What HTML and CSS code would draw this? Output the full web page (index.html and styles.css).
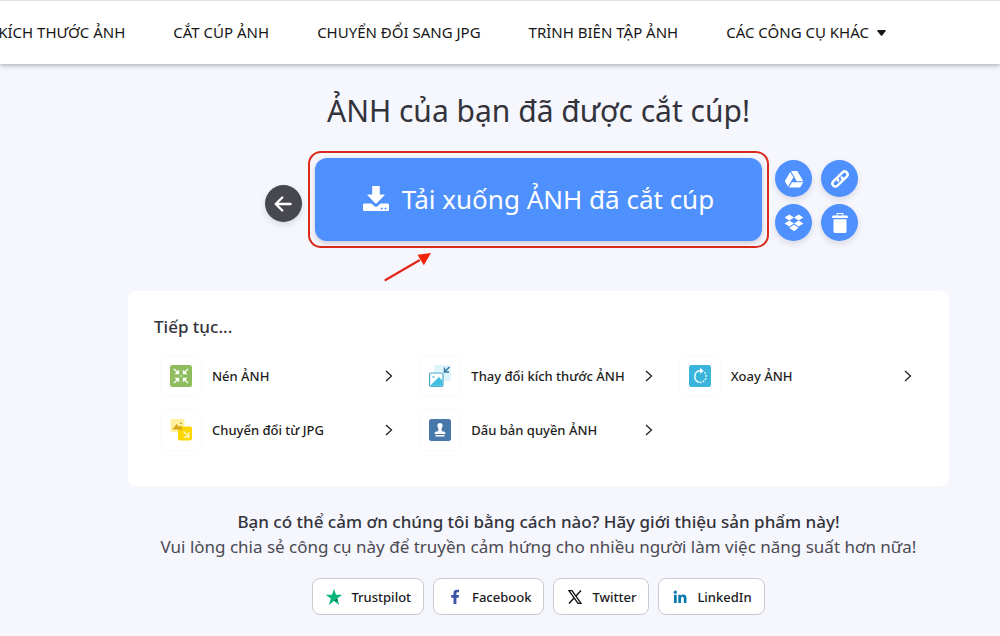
FILE: index.html
```html
<!DOCTYPE html>
<html lang="vi">
<head>
<meta charset="utf-8">
<meta name="viewport" content="width=device-width, initial-scale=1">
<title>ẢNH của bạn đã được cắt cúp!</title>
<link rel="stylesheet" href="styles.css">
</head>
<body>
<header class="topbar">
  <nav class="nav">
    <a href="#">KÍCH THƯỚC ẢNH</a>
    <a href="#">CẮT CÚP ẢNH</a>
    <a href="#">CHUYỂN ĐỔI SANG JPG</a>
    <a href="#">TRÌNH BIÊN TẬP ẢNH</a>
    <a href="#">CÁC CÔNG CỤ KHÁC
      <svg class="caret" viewBox="0 0 9 6" aria-hidden="true"><path d="M1 0h7q1.300 .1.500 1.200L5.200 5.400q-.7.700-1.400 0L.5 1.200Q-.3.100 1 0z"/></svg></a>
  </nav>
</header>

<main class="page">
  <h1 class="title">ẢNH của bạn đã được cắt cúp!</h1>

  <section class="actions">
    <button class="round back" type="button" aria-label="Quay lại">
      <svg viewBox="0 0 20 20" fill="none" stroke="currentColor" stroke-width="2.400" stroke-linecap="round" stroke-linejoin="round"><path d="M17.500 10H3M9.300 3.500 2.700 10l6.600 6.500"/></svg>
    </button>
    <div class="highlight">
      <button class="download" type="button">
        <svg viewBox="0 0 26 26" fill="currentColor" aria-hidden="true"><path fill-rule="evenodd" d="M9.800 0h6.400q.6 0 .6.600V8.500h4.400q1 0 .3.800l-7.700 8q-.8.700-1.600 0l-7.700-8Q3.800 8.500 4.800 8.500h4.400V.6q0-.6.600-.6zM1.200 17.500h7.300l2.600 2.600q1.900 1.600 3.800 0l2.600-2.600h7.300q1.200 0 1.200 1.200v5q0 1.300-1.200 1.300H1.200Q0 25 0 23.700v-5q0-1.200 1.200-1.200zM18.800 21.500a1 1 0 1 0 .01 0zM22.600 21.500a1 1 0 1 0 .01 0z"/></svg>
        <span>Tải xuống ẢNH đã cắt cúp</span>
      </button>
      <svg class="arrow" viewBox="0 0 48 30" aria-hidden="true"><path d="M1.500 28 35 8.500" stroke="#e0281a" stroke-width="2.200" stroke-linecap="round"/><path d="M47 1 33.500 2.800l6.300 10.400z" fill="#f22408"/></svg>
    </div>
    <div class="options">
      <button class="round" type="button" aria-label="Lưu vào Google Drive">
        <svg viewBox="0 0 20 18" fill="currentColor"><path d="M7 1h6.300l6 10.200h-6.500z"/><path d="M6.200 1.900 9.400 7.300 4 16.800.8 11.300z"/><path d="M8 12.200h11.300L16.100 17.500H5z"/></svg>
      </button>
      <button class="round" type="button" aria-label="Chia sẻ liên kết">
        <svg viewBox="0 0 20 20" fill="none" stroke="currentColor" stroke-width="2.500" stroke-linecap="round"><path d="M8.200 11.500Q6.300 9.600 8.200 7.700l4.300-4.300q2.200-2 4.200 0t0 4.200l-3.300 3.300"/><path d="M11.800 8.500q1.900 1.900 0 3.800l-4.300 4.300q-2.200 2-4.200 0t0-4.200l3.300-3.300"/></svg>
      </button>
      <button class="round" type="button" aria-label="Lưu vào Dropbox">
        <svg viewBox="0 0 20 18" fill="currentColor"><path d="m5.300.5 4.700 3-4.700 3-4.700-3zM14.700.5l4.700 3-4.700 3-4.700-3zM5.300 6.500l4.700 3-4.700 3-4.700-3zM14.700 6.500l4.700 3-4.700 3-4.700-3zM10 10.700l4.700 3-4.700 3.500-4.700-3.500z"/></svg>
      </button>
      <button class="round" type="button" aria-label="Xóa">
        <svg viewBox="0 0 18 20" fill="currentColor"><path d="M2 2.500h3.500V1q0-1 1-1h5q1 0 1 1v1.500H16q.8 0 .8.800V5H1.200V3.300q0-.8.800-.8zM6.500 1v1.500h5V1zM2.500 6.200h13v12.300q0 1.500-1.500 1.500H4q-1.500 0-1.500-1.500z" fill-rule="evenodd"/></svg>
      </button>
    </div>
  </section>

  <section class="card">
    <h2 class="card-title">Tiếp tục...</h2>
    <div class="tools">
      <a class="tool" href="#">
        <span class="tile"><svg viewBox="0 0 22 22"><rect width="22" height="22" rx="2.500" fill="#8fbc5d"/><g stroke="#fff" stroke-width="1.200" fill="#fff"><path d="m4 4 4 4M18 4l-4 4M4 18l4-4M18 18l-4-4"/><path stroke="none" d="M9.200 4.500v4.700H4.500zM12.800 4.500v4.700h4.700zM9.200 17.500v-4.700H4.500zM12.800 17.500v-4.700h4.700z"/></g><circle cx="11" cy="11" r=".8" fill="#fff"/></svg></span>
        <span class="name">Nén ẢNH</span>
        <svg class="chevron" viewBox="0 0 8 12"><path d="m1 1 5.500 5L1 11"/></svg>
      </a>
      <a class="tool" href="#">
        <span class="tile"><svg viewBox="0 0 22 22"><rect x="5" width="17" height="16" rx="1.500" fill="#dff5fb"/><rect x=".6" y="8" width="13.400" height="13.400" rx="1.200" fill="#fff" stroke="#4ba9d0" stroke-width="1.200"/><path d="M1.200 20.800 9.800 12l3.600 3.500v5.300z" fill="#42bfdf"/><circle cx="4.500" cy="12" r="1.100" fill="#62bdd8"/><path d="m20.500 2-4.500 4.500M15.500 2.500V7H20" stroke="#3577a5" stroke-width="1.500" fill="none"/></svg></span>
        <span class="name">Thay đổi kích thước ẢNH</span>
        <svg class="chevron" viewBox="0 0 8 12"><path d="m1 1 5.500 5L1 11"/></svg>
      </a>
      <a class="tool" href="#">
        <span class="tile"><svg viewBox="0 0 22 22"><rect width="22" height="22" rx="2.500" fill="#3bb4dc"/><g fill="none" stroke="#e8fbff" stroke-width="1.500"><path d="M10 17.300A6 6 0 0 1 11.500 5.600"/><path d="M15.500 7.300a6 6 0 0 1-5.500 10" stroke-dasharray="1.800 1.300"/></g><path d="m11 2.800 3.700 3.100L11 8.800z" fill="#fff"/></svg></span>
        <span class="name">Xoay ẢNH</span>
        <svg class="chevron" viewBox="0 0 8 12"><path d="m1 1 5.500 5L1 11"/></svg>
      </a>
      <a class="tool" href="#">
        <span class="tile"><svg viewBox="0 0 22 22"><rect x=".5" width="14" height="13" rx="1.500" fill="#fff0a0"/><rect x="8" y="7.500" width="14" height="14" rx="2" fill="#fbd504"/><path d="m2.500 10.500 4-5.500 2.700 3 1.300-1.500 2.500 4z" fill="#d5a51a"/><circle cx="11" cy="4.200" r=".9" fill="#c99c20"/><path d="m13.500 12.500 5 5M18.800 13v5h-5" stroke="#fff5b5" stroke-width="1.500" fill="none"/></svg></span>
        <span class="name">Chuyển đổi từ JPG</span>
        <svg class="chevron" viewBox="0 0 8 12"><path d="m1 1 5.500 5L1 11"/></svg>
      </a>
      <a class="tool" href="#">
        <span class="tile"><svg viewBox="0 0 22 22"><rect width="22" height="22" rx="2.500" fill="#4877aa"/><path d="M11 4a2.600 2.600 0 0 1 2.600 2.600c0 1.800-1.200 2.400-1 4.400 0 1.200.8 1.500 2.400 1.500q1.500.2 1.500 2.500h-11q0-2.300 1.500-2.500c1.600 0 2.400-.3 2.400-1.500.2-2-1-2.600-1-4.400A2.600 2.600 0 0 1 11 4zM6.500 16h9v1.500h-9z" fill="#fff"/></svg></span>
        <span class="name">Dấu bản quyền ẢNH</span>
        <svg class="chevron" viewBox="0 0 8 12"><path d="m1 1 5.500 5L1 11"/></svg>
      </a>
    </div>
  </section>

  <section class="thanks">
    <p class="thanks-title">Bạn có thể cảm ơn chúng tôi bằng cách nào? Hãy giới thiệu sản phẩm này!</p>
    <p class="thanks-text">Vui lòng chia sẻ công cụ này để truyền cảm hứng cho nhiều người làm việc năng suất hơn nữa!</p>
    <div class="shares">
      <a class="share" href="#"><svg viewBox="0 0 18 18"><path d="m9 .8 2 6h6.400l-5.200 3.800 2 6.300L9 13.100l-5.200 3.800 2-6.300L.6 6.800H7z" fill="#08b67a"/><path d="m12.200 10.600.7 2-3.900.5z" fill="#075c3e"/></svg>Trustpilot</a>
      <a class="share" href="#"><svg viewBox="0 0 18 18"><path d="M7.500 16V9.800H5.200V7h2.300V5.200C7.500 2.800 8.800 1.700 11 1.700h2v2.600h-1.300c-1 0-1.300.4-1.300 1.300V7H13l-.4 2.800h-2.200V16z" fill="#3d55a5"/></svg>Facebook</a>
      <a class="share" href="#"><svg viewBox="0 0 18 18" fill="none" stroke="#111"><path d="M3 2.700h3l9 12.600h-3z" stroke-width="1.300"/><path d="m15 2.500-5.200 5.800M8 10l-5 5.500" stroke-width="1.400"/></svg>Twitter</a>
      <a class="share" href="#"><svg viewBox="0 0 18 18" fill="#0878b0"><circle cx="4.300" cy="4.200" r="1.600"/><path d="M3 6.700h2.700V15H3zM7.300 6.700h2.600v1.200c1.500-2.300 5.600-1.700 5.600 2V15h-2.700v-4.500c0-2.200-2.800-2.200-2.800 0V15H7.300z"/></svg>LinkedIn</a>
    </div>
  </section>
</main>
</body>
</html>
```
FILE: styles.css
```css
* { box-sizing: border-box; }

body {
  margin: 0;
  background: #f6f6fd;
  color: #33333b;
  font-family: "Noto Sans", "Open Sans", sans-serif;
  overflow-x: hidden;
}

a { color: inherit; text-decoration: none; }
button { border: 0; padding: 0; font: inherit; color: #fff; cursor: pointer; }
svg { display: block; flex: none; }
h1, h2, p { margin: 0; }

.topbar {
  background: #fff;
  border-top: 1px solid #e2e2e4;
  box-shadow: 0 1px 5px rgba(30, 30, 50, .4);
}
.nav {
  display: flex;
  justify-content: flex-end;
  gap: 48px;
  padding: 0 114px 0 0;
  overflow: hidden;
  color: #161616;
  font-size: 15px;
  line-height: 63px;
  white-space: nowrap;
}
.nav a { display: flex; align-items: center; gap: 8px; }
.caret { width: 9px; height: 6px; fill: #161616; }

.page { padding: 24px 51px 20px 128px; }

.title {
  text-align: center;
  font-size: 30px;
  line-height: 46px;
  font-weight: 400;
}

.actions {
  display: grid;
  grid-template-columns: 1fr auto 1fr;
  align-items: center;
  gap: 6px;
  margin-top: 17px;
}
.round {
  display: grid;
  place-items: center;
  width: 37px;
  height: 37px;
  border-radius: 50%;
  background: #4d90fe;
  box-shadow: 0 3px 6px rgba(60, 60, 100, .15);
}
.round svg { width: 20px; height: 20px; }
.back { justify-self: end; background: #47474f; margin-top: 8px; }

.highlight {
  position: relative;
  padding: 5px;
  border: 2px solid #d92a1c;
  border-radius: 13px;
}
.download {
  display: flex;
  align-items: center;
  justify-content: center;
  gap: 13px;
  min-height: 83px;
  padding: 0 48px 2px;
  border-radius: 12px;
  background: #4d90fe;
  box-shadow: 0 2px 5px rgba(60, 60, 100, .25);
  font-size: 26px;
  line-height: 40px;
}
.download svg { width: 26px; height: 26px; }
.arrow {
  position: absolute;
  left: 74px;
  top: 99px;
  width: 48px;
  height: 30px;
  fill: none;
}
.options {
  display: grid;
  grid-template-columns: auto auto;
  justify-content: start;
  gap: 7px 9px;
  padding-top: 2px;
}

.card {
  margin-top: 43px;
  padding: 22px 17px 36px 26px;
  border-radius: 8px;
  background: #fff;
}
.card-title { font-size: 17px; line-height: 28px; font-weight: 500; }
.tools {
  display: grid;
  grid-template-columns: repeat(3, 1fr);
  gap: 14px 0;
  margin-top: 15px;
}
.tool {
  display: flex;
  align-items: center;
  gap: 11px;
  padding: 0 20px 0 7px;
  color: #1d1d20;
  font-size: 13px;
  font-weight: 500;
  white-space: nowrap;
}
.tile {
  display: grid;
  place-items: center;
  width: 40px;
  height: 40px;
  border-radius: 8px;
  box-shadow: 0 0 3px rgba(60, 60, 100, .06);
}
.tile svg { width: 22px; height: 22px; }
.name { flex: 1; }
.chevron { width: 8px; height: 12px; fill: none; stroke: #222; stroke-width: 1.3; }

.thanks { margin-top: 24px; text-align: center; }
.thanks-title { font-size: 17px; line-height: 24px; font-weight: 500; }
.thanks-text { font-size: 17px; line-height: 26px; color: #4b4b53; }
.shares {
  display: flex;
  justify-content: center;
  gap: 9px;
  margin-top: 18px;
}
.share {
  display: flex;
  align-items: center;
  gap: 8px;
  height: 37px;
  padding: 0 12px;
  border: 1px solid #c9c9d2;
  border-radius: 8px;
  background: #fff;
  color: #1a1a1c;
  font-size: 13px;
  font-weight: 500;
}
.share svg { width: 18px; height: 18px; }
```
